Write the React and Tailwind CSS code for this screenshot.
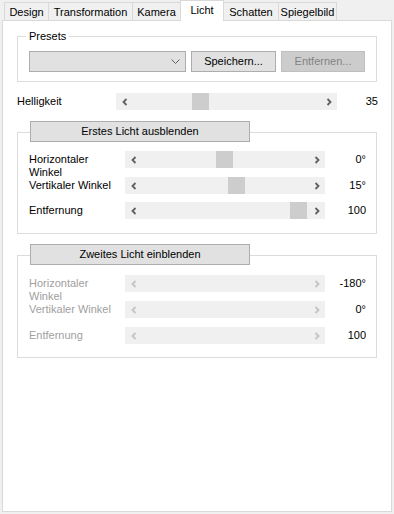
import React from "react";

const font = "font-['Liberation_Sans',Arial,sans-serif] text-[11px]";

const tabs = [
  { label: "Design", w: "w-[44px]" },
  { label: "Transformation", w: "w-[84px]" },
  { label: "Kamera", w: "w-[48px]" },
  { label: "Licht", w: "w-[44px]", active: true },
  { label: "Schatten", w: "w-[54px]" },
  { label: "Spiegelbild", w: "w-[59px]", last: true },
];

const Chevron = ({ dir, disabled }) => (
  <svg width="8" height="8" viewBox="0 0 8 8">
    <polyline
      points={dir === "left" ? "5.5,1 2.5,4 5.5,7" : "2.5,1 5.5,4 2.5,7"}
      fill="none"
      stroke={disabled ? "#c4c4c4" : "#606060"}
      strokeWidth="1.8"
    />
  </svg>
);

const Slider = ({ width, thumb, disabled }) => (
  <div className={`flex h-[17px] bg-[#f0f0f0] shrink-0 ${width}`}>
    <div className="w-[17px] flex items-center justify-center">
      <Chevron dir="left" disabled={disabled} />
    </div>
    <div className="flex-1 relative">
      {!disabled && (
        <div
          className="absolute top-0 h-full w-[17px] bg-[#cdcdcd]"
          style={{ left: thumb }}
        />
      )}
    </div>
    <div className="w-[17px] flex items-center justify-center">
      <Chevron dir="right" disabled={disabled} />
    </div>
  </div>
);

const Row = ({ label, value, thumb, disabled, className = "" }) => (
  <div className={`flex items-start h-[17px] ${className}`}>
    <div
      className={`w-[96px] shrink-0 leading-[13px] pt-[2px] ${
        disabled ? "text-[#a0a0a0]" : "text-black"
      }`}
    >
      {label}
    </div>
    <Slider width="w-[200px]" thumb={thumb} disabled={disabled} />
    <div className="flex-1 text-right leading-[17px] text-black">{value}</div>
  </div>
);

const LightGroup = ({ title, rows, disabled, className = "", top, bottom }) => (
  <div className={`relative border border-[#dcdcdc] mx-[14px] pl-[11px] pr-[10px] ${top} ${bottom} ${className}`}>
    <button className="absolute left-[12px] top-[-12px] w-[220px] h-[21px] bg-[#e1e1e1] border border-[#adadad] text-black">
      {title}
    </button>
    <Row label={<>Horizontaler<br />Winkel</>} value={rows[0].value} thumb={rows[0].thumb} disabled={disabled} />
    <Row label="Vertikaler Winkel" value={rows[1].value} thumb={rows[1].thumb} disabled={disabled} className="mt-[9px]" />
    <Row label="Entfernung" value={rows[2].value} thumb={rows[2].thumb} disabled={disabled} className={disabled ? "mt-[9px]" : "mt-[8px]"} />
  </div>
);

export default function App() {
  return (
    <div className={`w-[394px] h-[514px] bg-[#f0f0f0] ${font} text-black`}>
      <div className="flex items-end h-[20px] pl-[4px]">
        {tabs.map((t) =>
          t.active ? (
            <div
              key={t.label}
              className={`${t.w} h-[21px] -mb-px relative z-10 bg-white border-t border-l border-r border-[#d9d9d9] text-center leading-[18px]`}
            >
              {t.label}
            </div>
          ) : (
            <div
              key={t.label}
              className={`${t.w} h-[18px] border-t border-l ${t.last ? "border-r" : ""} ${
                t.label === "Schatten" ? "border-l-0" : ""
              } border-[#d9d9d9] text-center leading-[19px]`}
            >
              {t.label}
            </div>
          )
        )}
      </div>

      <div className="ml-[2px] w-[390px] h-[492px] bg-white border border-[#d9d9d9]">
        <div className="relative mt-[15px] mx-[14px] h-[46px] border border-[#dcdcdc] pt-[14px] pl-[11px] flex gap-[5px]">
          <div className="absolute left-[8px] top-[-8px] bg-white px-[3px] leading-[14px]">Presets</div>
          <div className="w-[157px] h-[21px] bg-[#e1e1e1] border border-[#adadad] flex items-center justify-end pr-[5px]">
            <svg width="9" height="6" viewBox="0 0 9 6">
              <polyline points="0.5,0.5 4.5,4.5 8.5,0.5" fill="none" stroke="#606060" strokeWidth="1" />
            </svg>
          </div>
          <button className="w-[85px] h-[21px] bg-[#e1e1e1] border border-[#adadad] text-black">Speichern...</button>
          <button className="w-[84px] h-[21px] bg-[#cccccc] border border-[#bfbfbf] text-[#838383]">Entfernen...</button>
        </div>

        <div className="flex items-center mt-[11px] ml-[14px] mr-[13px] h-[17px]">
          <div className="w-[99px] shrink-0">Helligkeit</div>
          <Slider width="w-[221px]" thumb={59} />
          <div className="flex-1 text-right">35</div>
        </div>

        <LightGroup
          title="Erstes Licht ausblenden"
          className="mt-[22px]"
          top="pt-[18px]"
          bottom="pb-[14px]"
          rows={[
            { value: "0°", thumb: 74 },
            { value: "15°", thumb: 86 },
            { value: "100", thumb: 148 },
          ]}
        />

        <LightGroup
          title="Zweites Licht einblenden"
          disabled
          className="mt-[21px]"
          top="pt-[19px]"
          bottom="pb-[13px]"
          rows={[
            { value: "-180°" },
            { value: "0°" },
            { value: "100" },
          ]}
        />
      </div>
    </div>
  );
}
